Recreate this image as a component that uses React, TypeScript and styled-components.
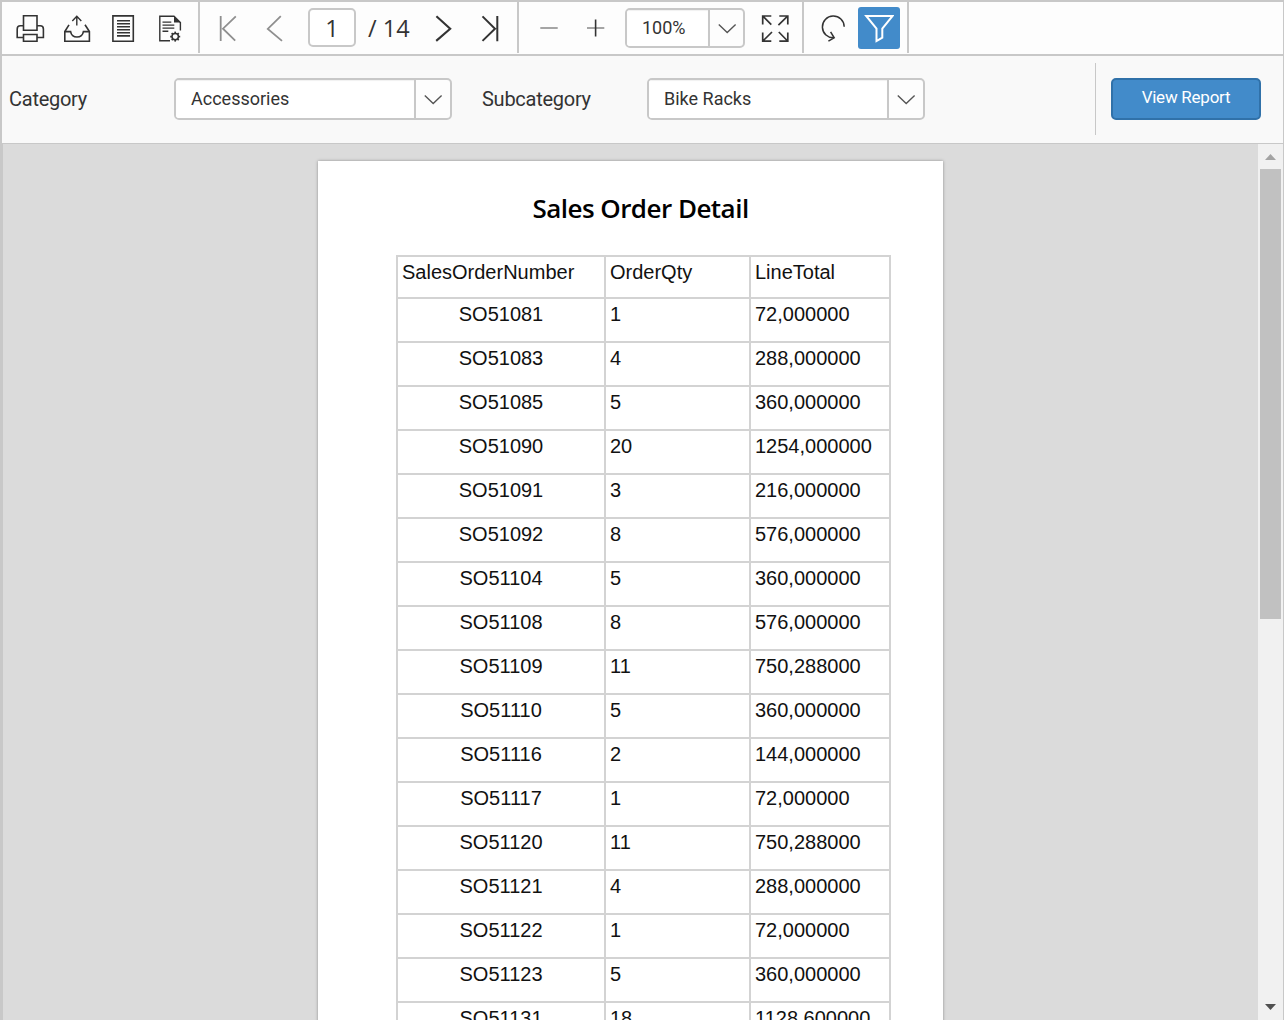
import React from "react";
import styled, { createGlobalStyle } from "styled-components";

const line = "#c8c8c8";
const ink = "#333333";
const muted = "#8f8f8f";

const Global = createGlobalStyle`
  * { box-sizing: border-box; }
  html, body { margin: 0; padding: 0; }
  body { font-family: Roboto, "Liberation Sans", sans-serif; color: ${ink}; overflow: hidden; }
`;

const Viewer = styled.main`
  width: 1284px;
  height: 1020px;
  display: flex;
  flex-direction: column;
  border: solid ${line};
  border-width: 2px 1px 0 2px;
  overflow: hidden;
`;

const Toolbar = styled.header`
  display: flex;
  flex: none;
  height: 54px;
  background: #fdfdfd;
  border-bottom: 2px solid ${line};
`;

const Group = styled.div<{ $width: number; $start: number }>`
  display: flex;
  align-items: center;
  width: ${(p) => p.$width}px;
  height: 51px;
  padding: 1px 0 0 ${(p) => p.$start}px;
  border-right: 2px solid ${line};
`;

const Glyph = styled.svg<{ $gap?: number; $color?: string; $weight?: number }>`
  flex: none;
  display: block;
  width: 30px;
  height: 30px;
  margin-left: ${(p) => p.$gap ?? 0}px;
  fill: none;
  stroke: ${(p) => p.$color ?? ink};
  stroke-width: ${(p) => p.$weight ?? 1.6};
`;

const PageBox = styled.div`
  flex: none;
  width: 48px;
  height: 39px;
  margin: -1px 0 0 18px;
  border: 2px solid ${line};
  border-radius: 5px;
  background: #fff;
  font: 400 23.5px/37px "Open Sans", "Noto Sans", sans-serif;
  text-align: center;
`;

const PageTotal = styled.span`
  flex: none;
  width: 60px;
  padding-left: 12px;
  font: 400 23.5px/36px "Open Sans", "Noto Sans", sans-serif;
  white-space: pre;
`;

const Combo = styled.div<{ $width: number; $height: number; $gap?: number }>`
  display: flex;
  flex: none;
  width: ${(p) => p.$width}px;
  height: ${(p) => p.$height}px;
  margin-left: ${(p) => p.$gap ?? 0}px;
  border: 2px solid ${line};
  border-radius: 5px;
  background: #fdfdfd;
  overflow: hidden;
`;

const ComboValue = styled.div<{ $line: number }>`
  flex: 1;
  padding-left: 15px;
  background: #fff;
  border-right: 2px solid ${line};
  box-shadow: inset 0 1px 1px rgba(0, 0, 0, 0.06);
  font-size: 18px;
  line-height: ${(p) => p.$line}px;
`;

const ComboArrow = styled.div<{ $width: number }>`
  width: ${(p) => p.$width}px;
  display: flex;
  align-items: center;
  justify-content: center;
`;

const FilterButton = styled.button`
  display: flex;
  align-items: center;
  justify-content: center;
  width: 42px;
  height: 42px;
  margin-left: 9px;
  padding: 0;
  border: 0;
  border-radius: 3px;
  background: #428bca;
`;

const Parameters = styled.section`
  display: flex;
  flex: none;
  height: 88px;
  padding: 7px 22px 0 7px;
  background: #f9f9f9;
  border-bottom: 1px solid ${line};
`;

const Field = styled.label`
  display: flex;
  width: 473px;
  padding-top: 15px;
`;

const FieldName = styled.span`
  width: 165px;
  font-size: 20px;
  line-height: 42px;
  letter-spacing: -0.26px;
`;

const Submit = styled.div`
  margin-left: auto;
  height: 72px;
  padding: 15px 0 0 15px;
  border-left: 1px solid ${line};
`;

const ViewButton = styled.button`
  display: block;
  width: 150px;
  height: 42px;
  padding: 0 0 3px;
  border: 2px solid #3071a9;
  border-radius: 5px;
  background: #428bca;
  color: #fff;
  font: 400 17px/35px Roboto, sans-serif;
  letter-spacing: -0.25px;
`;

const Body = styled.section`
  display: flex;
  flex: 1;
  min-height: 0;
  border-left: 1px solid ${line};
  background: #dbdbdb;
`;

const Canvas = styled.div`
  flex: 1;
  padding: 17px 0 0 315px;
  overflow: hidden;
`;

const Sheet = styled.article`
  width: 625px;
  height: 1100px;
  padding: 0 52px 0 78px;
  background: #fff;
  box-shadow: 0 0 3px rgba(0, 0, 0, 0.35);
`;

const Title = styled.h1`
  margin: 0;
  height: 94px;
  padding: 28px 0 0 0;
  width: 489px;
  text-align: center;
  color: #000;
  font: 600 26px/38px "Open Sans", "Noto Sans", sans-serif;
  letter-spacing: -0.53px;
  white-space: nowrap;
`;

const Table = styled.div`
  width: 495px;
  border: solid #d3d3d3;
  border-width: 2px 0 0 2px;
  color: #111;
  font: 400 20px/23px "Liberation Sans", Arial, sans-serif;
`;

const Row = styled.div<{ $head?: boolean }>`
  display: grid;
  grid-template-columns: 208px 145px 140px;
  height: ${(p) => (p.$head ? 42 : 44)}px;
`;

const Cell = styled.div<{ $center?: boolean }>`
  padding: 4px 0 0 ${(p) => (p.$center ? 0 : 4)}px;
  border: solid #d3d3d3;
  border-width: 0 2px 2px 0;
  text-align: ${(p) => (p.$center ? "center" : "left")};
`;

const ScrollTrack = styled.div`
  display: flex;
  flex-direction: column;
  align-items: center;
  width: 25px;
  background: #f1f1f1;
`;

const ScrollThumb = styled.div`
  width: 21px;
  height: 450px;
  margin-bottom: auto;
  background: #c1c1c1;
`;

const ScrollArrow = styled.svg`
  flex: none;
  width: 25px;
  height: 25px;
`;

const rows: [string, string, string][] = [
  ["SO51081", "1", "72,000000"],
  ["SO51083", "4", "288,000000"],
  ["SO51085", "5", "360,000000"],
  ["SO51090", "20", "1254,000000"],
  ["SO51091", "3", "216,000000"],
  ["SO51092", "8", "576,000000"],
  ["SO51104", "5", "360,000000"],
  ["SO51108", "8", "576,000000"],
  ["SO51109", "11", "750,288000"],
  ["SO51110", "5", "360,000000"],
  ["SO51116", "2", "144,000000"],
  ["SO51117", "1", "72,000000"],
  ["SO51120", "11", "750,288000"],
  ["SO51121", "4", "288,000000"],
  ["SO51122", "1", "72,000000"],
  ["SO51123", "5", "360,000000"],
  ["SO51131", "18", "1128,600000"],
];

const teeth = [0, 45, 90, 135, 180, 225, 270, 315];

const Chevron = () => (
  <Glyph viewBox="0 0 30 30" $color="#555" $weight={1.4}>
    <path d="M6.8 11.5 15.2 19.5 23.6 11.5" />
  </Glyph>
);

const Select = ({ value }: { value: string }) => (
  <Combo $width={278} $height={42}>
    <ComboValue $line={37}>{value}</ComboValue>
    <ComboArrow $width={34}><Chevron /></ComboArrow>
  </Combo>
);

export default function App() {
  return (
    <>
      <Global />
      <Viewer>
        <Toolbar>
          <Group $width={198} $start={13}>
            <Glyph viewBox="0 0 30 30">
              <path d="M8.5 2.8H22V17.2H8.5ZM8.5 21.5H22V28.2H8.5ZM8.5 12.8H5.4a3.2 3.2 0 0 0-3.2 3.2v8.5H8.5M22 12.8h3.2a3.2 3.2 0 0 1 3.2 3.2v8.5H22" />
            </Glyph>
            <Glyph viewBox="0 0 30 30" $gap={17}>
              <path d="M7 11.8 2.8 18.6V28.2H27.4V18.6L23 11.8M2.8 18.6H8.6C9.2 22 11.8 24 15 24S20.8 22 21.4 18.6H27.4" />
              <path d="M14.8 12.4V3.4M10.3 8 14.8 3.2 19.3 8" strokeWidth="1.4" />
            </Glyph>
            <Glyph viewBox="0 0 30 30" $gap={16}>
              <path d="M4.9 2.9H25.3V28.2H4.9Z" />
              <path d="M9 7.7H22M9 10.7H22M9 13.7H22M9 16.7H22M9 19.7H22M9 22.9H22" />
            </Glyph>
            <Glyph viewBox="0 0 30 30" $gap={17}>
              <path d="M15 27.7H4.8V3.2H19L25.4 9.5V17.5" strokeWidth="1.4" />
              <path d="M19 3V9.6H25.6Z" fill={ink} stroke="none" />
              <path d="M7.5 9.1H16.3M7.5 12.1H19.3M7.5 15.1H19.3M7.5 18.2H13.3" strokeWidth="1.4" />
              <circle cx="20.2" cy="23.6" r="3.2" strokeWidth="1.5" />
              {teeth.map((a) => (
                <path key={a} d="M20.2 20.4V18.6" transform={`rotate(${a} 20.2 23.6)`} strokeWidth="1.7" />
              ))}
            </Glyph>
          </Group>

          <Group $width={319} $start={13}>
            <Glyph viewBox="0 0 30 30" $color={muted} $weight={1.8}>
              <path d="M7.7 3V28M22.8 3.4 10 15.7 22.2 27.7" />
            </Glyph>
            <Glyph viewBox="0 0 30 30" $gap={17} $color={muted} $weight={1.8}>
              <path d="M20.8 3.2 7.8 15.9 22 27.9" />
            </Glyph>
            <PageBox>1</PageBox>
            <PageTotal>/ 14</PageTotal>
            <Glyph viewBox="0 0 30 30" $gap={12} $weight={2.1}>
              <path d="M8.4 3.2 22.2 15.7 8.2 27.9" />
            </Glyph>
            <Glyph viewBox="0 0 30 30" $gap={17} $weight={2}>
              <path d="M22.3 3V28.3M7.5 3.4 20 15.7 7.5 27.9" />
            </Glyph>
          </Group>

          <Group $width={285} $start={15}>
            <Glyph viewBox="0 0 30 30" $color={muted}>
              <path d="M6.3 15H23.7" />
            </Glyph>
            <Glyph viewBox="0 0 30 30" $gap={16}>
              <path d="M7 15H24.3" stroke={muted} />
              <path d="M15.6 6.5V23.5" />
            </Glyph>
            <Combo $width={120} $height={40} $gap={15}>
              <ComboValue $line={35}>100%</ComboValue>
              <ComboArrow $width={33}><Chevron /></ComboArrow>
            </Combo>
            <Glyph viewBox="0 0 30 30" $gap={15} $weight={1.7}>
              <path d="M2.7 11.5V3H11.3M2.9 3.2 11.3 11.6M19.3 3H27.8V11.5M27.6 3.2 18.4 12.2M2.7 19.5V28.2H11.3M2.9 28 12 19M27.8 19.5V28.2H19.3M27.6 28 18.8 19" />
            </Glyph>
          </Group>

          <Group $width={105} $start={15}>
            <Glyph viewBox="0 0 30 30" $weight={1.5}>
              <path d="M25.2 13.8A10.9 10.9 0 1 0 14.9 24.8M11.6 18.8 15.2 24.8 9.4 28.2" />
            </Glyph>
            <FilterButton aria-label="Filter">
              <Glyph viewBox="0 0 30 30" $color="#fff" $weight={2}>
                <path d="M2.2 3H28.6L18.3 15.5V24.6L12.5 28V15.5Z" />
              </Glyph>
            </FilterButton>
          </Group>
        </Toolbar>

        <Parameters>
          <Field>
            <FieldName>Category</FieldName>
            <Select value="Accessories" />
          </Field>
          <Field>
            <FieldName>Subcategory</FieldName>
            <Select value="Bike Racks" />
          </Field>
          <Submit>
            <ViewButton>View Report</ViewButton>
          </Submit>
        </Parameters>

        <Body>
          <Canvas>
            <Sheet>
              <Title>Sales Order Detail</Title>
              <Table>
                <Row $head>
                  <Cell>SalesOrderNumber</Cell>
                  <Cell>OrderQty</Cell>
                  <Cell>LineTotal</Cell>
                </Row>
                {rows.map(([order, qty, total]) => (
                  <Row key={order}>
                    <Cell $center>{order}</Cell>
                    <Cell>{qty}</Cell>
                    <Cell>{total}</Cell>
                  </Row>
                ))}
              </Table>
            </Sheet>
          </Canvas>
          <ScrollTrack>
            <ScrollArrow viewBox="0 0 25 25">
              <path d="M7 16 12.5 10 18 16Z" fill="#a3a3a3" />
            </ScrollArrow>
            <ScrollThumb />
            <ScrollArrow viewBox="0 0 25 25">
              <path d="M7 9 12.5 15 18 9Z" fill="#505050" />
            </ScrollArrow>
          </ScrollTrack>
        </Body>
      </Viewer>
    </>
  );
}
